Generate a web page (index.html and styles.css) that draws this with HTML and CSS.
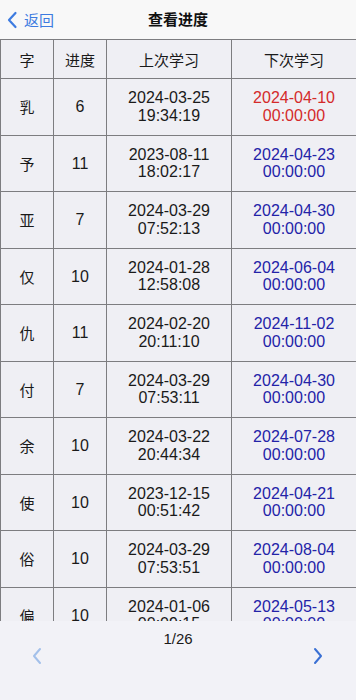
FILE: index.html
```html
<!DOCTYPE html>
<html lang="zh">
<head>
<meta charset="utf-8">
<link rel="stylesheet" href="styles.css">
</head>
<body>
<div class="screen">
  <header class="nav">
    <div class="back">
      <svg class="back-icon" width="12" height="18" viewBox="0 0 12 18"><path d="M9.5 2 L3 9 L9.5 16" fill="none" stroke="#3d7be0" stroke-width="2.2" stroke-linecap="round" stroke-linejoin="round"/></svg>
      <span>返回</span>
    </div>
    <div class="title">查看进度</div>
  </header>
  <div class="table-wrap">
    <table class="grid">
      <colgroup><col class="c1"><col class="c2"><col class="c3"><col class="c4"></colgroup>
      <thead>
        <tr><th>字</th><th>进度</th><th>上次学习</th><th>下次学习</th></tr>
      </thead>
      <tbody>
        <tr><td class="ch">乳</td><td>6</td><td>2024-03-25<br>19:34:19</td><td class="due">2024-04-10<br>00:00:00</td></tr>
        <tr><td class="ch">予</td><td>11</td><td>2023-08-11<br>18:02:17</td><td class="next">2024-04-23<br>00:00:00</td></tr>
        <tr><td class="ch">亚</td><td>7</td><td>2024-03-29<br>07:52:13</td><td class="next">2024-04-30<br>00:00:00</td></tr>
        <tr><td class="ch">仅</td><td>10</td><td>2024-01-28<br>12:58:08</td><td class="next">2024-06-04<br>00:00:00</td></tr>
        <tr><td class="ch">仇</td><td>11</td><td>2024-02-20<br>20:11:10</td><td class="next">2024-11-02<br>00:00:00</td></tr>
        <tr><td class="ch">付</td><td>7</td><td>2024-03-29<br>07:53:11</td><td class="next">2024-04-30<br>00:00:00</td></tr>
        <tr><td class="ch">余</td><td>10</td><td>2024-03-22<br>20:44:34</td><td class="next">2024-07-28<br>00:00:00</td></tr>
        <tr><td class="ch">使</td><td>10</td><td>2023-12-15<br>00:51:42</td><td class="next">2024-04-21<br>00:00:00</td></tr>
        <tr><td class="ch">俗</td><td>10</td><td>2024-03-29<br>07:53:51</td><td class="next">2024-08-04<br>00:00:00</td></tr>
        <tr><td class="ch">偏</td><td>10</td><td>2024-01-06<br>00:09:15</td><td class="next">2024-05-13<br>00:00:00</td></tr>
      </tbody>
    </table>
  </div>
  <footer class="pager">
    <div class="page-num">1/26</div>
    <div class="arrows">
      <svg width="12" height="20" viewBox="0 0 12 20"><path d="M9 3 L3 10 L9 17" fill="none" stroke="#a3c0ea" stroke-width="2" stroke-linecap="round" stroke-linejoin="round"/></svg>
      <svg width="12" height="20" viewBox="0 0 12 20"><path d="M3 3 L9 10 L3 17" fill="none" stroke="#3a70d4" stroke-width="2" stroke-linecap="round" stroke-linejoin="round"/></svg>
    </div>
  </footer>
</div>
</body>
</html>
```

FILE: styles.css
```css
html, body {
  margin: 0;
  padding: 0;
}
body {
  font-family: "Liberation Sans", "Noto Sans CJK SC", sans-serif;
  background: #f9f9f9;
  color: #111;
}
.screen {
  width: 356px;
  height: 700px;
  display: flex;
  flex-direction: column;
  overflow: hidden;
}
.nav {
  height: 39px;
  flex: none;
  display: flex;
  align-items: center;
  justify-content: center;
  position: relative;
  background: #f8f8f8;
}
.back {
  position: absolute;
  left: 6px;
  top: 9px;
  display: flex;
  align-items: center;
  gap: 6px;
  color: #3d7be0;
  font-family: "Noto Sans CJK SC", sans-serif;
  font-size: 15px;
}
.title {
  font-family: "Noto Sans CJK SC", sans-serif;
  font-weight: 700;
  font-size: 15px;
  color: #111;
  margin-top: -2px;
}
.table-wrap {
  flex: none;
  height: 582px;
  overflow: hidden;
  background: #efeff4;
}
.grid {
  width: 356px;
  table-layout: fixed;
  border-collapse: collapse;
  background: #efeff4;
}
.c1 { width: 53px; }
.c2 { width: 53px; }
.c3 { width: 125px; }
.c4 { width: 125px; }
.grid th, .grid td {
  border: 1px solid #7d7d80;
  text-align: center;
  padding: 0;
}
.grid th {
  height: 38px;
  font-family: "Noto Sans CJK SC", sans-serif;
  font-weight: 400;
  font-size: 15px;
  color: #1a1a1a;
}
.grid td {
  height: 55.5px;
  font-size: 16px;
  line-height: 17.5px;
  color: #1a1a1a;
}
.grid td.ch {
  font-family: "Noto Sans CJK SC", sans-serif;
  font-size: 15px;
}
.grid td.due { color: #d42a2a; }
.grid td.next { color: #2323a8; }
.pager {
  flex: 1;
  background: #f2f2f7;
  position: relative;
}
.page-num {
  text-align: center;
  font-size: 15px;
  color: #1a1a1a;
  margin-top: 9px;
}
.arrows {
  display: flex;
  justify-content: space-between;
  padding: 0 32px 0 31px;
  margin-top: -1px;
}
```
